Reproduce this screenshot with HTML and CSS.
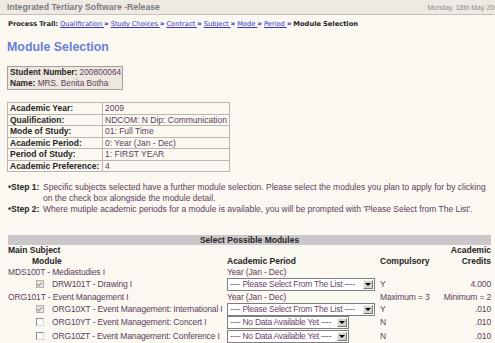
FILE: index.html
```html
<!DOCTYPE html>
<html lang="en">
<head>
    <meta charset="UTF-8">
    <title>Module Selection</title>
    <link rel="stylesheet" href="styles.css">
</head>
<body>
    <div class="topbar">
        <span class="app-name">Integrated Tertiary Software -Release</span>
        <span class="today">Monday, 18th May 2009</span>
    </div>

    <div class="trail">
        <b>Process Trail:</b>
        <a href="#">Qualification </a><span class="sep">&raquo;</span>
        <a href="#">Study Choices </a><span class="sep">&raquo;</span>
        <a href="#">Contract </a><span class="sep">&raquo;</span>
        <a href="#">Subject </a><span class="sep">&raquo;</span>
        <a href="#">Mode </a><span class="sep">&raquo;</span>
        <a href="#">Period </a><span class="sep">&raquo;</span>
        <b>Module Selection</b>
    </div>

    <h1 class="page-title">Module Selection</h1>

    <div class="student">
        <div><b>Student Number:</b> 200800064</div>
        <div><b>Name:</b> MRS. Benita Botha</div>
    </div>

    <table class="info">
        <tr><th>Academic Year:</th><td>2009</td></tr>
        <tr><th>Qualification:</th><td>NDCOM: N Dip: Communication</td></tr>
        <tr><th>Mode of Study:</th><td>01: Full Time</td></tr>
        <tr><th>Academic Period:</th><td>0: Year (Jan - Dec)</td></tr>
        <tr><th>Period of Study:</th><td>1: FIRST YEAR</td></tr>
        <tr><th>Academic Preference:</th><td>4</td></tr>
    </table>

    <div class="steps">
        <div class="step">
            <span class="step-label">&bull;Step 1:</span>
            <span>Specific subjects selected have a further module selection. Please select the modules you plan to apply for by clicking<br>on the check box alongside the module detail.</span>
        </div>
        <div class="step">
            <span class="step-label">&bull;Step 2:</span>
            <span>Where mutiple academic periods for a module is available, you will be prompted with 'Please Select from The List'.</span>
        </div>
    </div>

    <table class="modules">
        <colgroup>
            <col class="c-module">
            <col class="c-period">
            <col class="c-comp">
            <col class="c-credits">
        </colgroup>
        <tr><th colspan="4" class="bar">Select Possible Modules</th></tr>
        <tr class="head">
            <th colspan="3">Main Subject</th>
            <th class="num">Academic</th>
        </tr>
        <tr class="head">
            <th class="indent">Module</th>
            <th>Academic Period</th>
            <th>Compulsory</th>
            <th class="num">Credits</th>
        </tr>

        <tr>
            <td>MDS100T - Mediastudies I</td>
            <td>Year (Jan - Dec)</td>
            <td></td><td></td>
        </tr>
        <tr class="pick">
            <td class="mod"><span class="check on"></span>DRW101T - Drawing I</td>
            <td><div class="dropdown wide"><span class="dd-text">---- Please Select From The List ----</span><span class="dd-btn"></span></div></td>
            <td>Y</td>
            <td class="num">4.000</td>
        </tr>

        <tr>
            <td>ORG101T - Event Management I</td>
            <td>Year (Jan - Dec)</td>
            <td>Maximum = 3</td>
            <td class="num">Minimum = 2</td>
        </tr>
        <tr class="pick">
            <td class="mod"><span class="check on"></span>ORG10XT - Event Management: International I</td>
            <td><div class="dropdown wide"><span class="dd-text">---- Please Select From The List ----</span><span class="dd-btn"></span></div></td>
            <td>Y</td>
            <td class="num">.010</td>
        </tr>
        <tr class="pick">
            <td class="mod"><span class="check"></span>ORG10YT - Event Management: Concert I</td>
            <td><div class="dropdown"><span class="dd-text">---- No Data Available Yet ----</span><span class="dd-btn"></span></div></td>
            <td>N</td>
            <td class="num">.010</td>
        </tr>
        <tr class="pick">
            <td class="mod"><span class="check"></span>ORG10ZT - Event Management: Conference I</td>
            <td><div class="dropdown"><span class="dd-text">---- No Data Available Yet ----</span><span class="dd-btn"></span></div></td>
            <td>N</td>
            <td class="num">.010</td>
        </tr>
    </table>
</body>
</html>
```

FILE: styles.css
```css
html, body {
    overflow: hidden;
}
body {
    margin: 0;
    background: #fbf8f1;
    font-family: "Liberation Sans", Arial, sans-serif;
    font-size: 8.5px;
    line-height: 11px;
    color: #5c3f5c;
}
.topbar {
    height: 14px;
    background: #eee9e2;
    border-bottom: 1px solid #c6c1bb;
    display: flex;
    justify-content: space-between;
    align-items: center;
    padding-left: 7px;
}
.app-name {
    font-weight: bold;
    font-size: 8.7px;
    color: #7b7b7b;
}
.today {
    font-size: 7px;
    color: #8c8c8c;
    white-space: nowrap;
    margin-right: -7px;
}
.trail {
    font-family: "DejaVu Sans", Verdana, sans-serif;
    font-size: 6.7px;
    line-height: 10px;
    margin: 4px 8px 0;
    color: #1e1e1e;
    white-space: nowrap;
    word-spacing: -0.3px;
}
.trail a {
    color: #3535c8;
}
.trail .sep {
    color: #3535c8;
    font-weight: bold;
    font-size: 7.5px;
}
.page-title {
    margin: 10px 7px 0;
    font-size: 12.4px;
    line-height: 16px;
    color: #6b7fd9;
}
.student {
    width: 110px;
    margin: 11px 0 0 7px;
    padding: 0 2px;
    border: 1px solid #a39f9a;
    background: #eee7df;
    font-size: 8.3px;
    white-space: nowrap;
}
.student b, .info th {
    color: #262626;
}
.info {
    margin: 12px 0 0 7px;
    border-collapse: collapse;
    border: 1px solid #a9a5a0;
}
.info th, .info td {
    border: 1px solid #b9b5b0;
    padding: 0 2px;
    text-align: left;
    white-space: nowrap;
    line-height: 10.5px;
    height: 10.5px;
}
.info th {
    width: 90px;
}
.info td {
    width: 118px;
}
.steps {
    margin: 10px 0 0 8px;
}
.step {
    display: flex;
}
.step-label {
    flex: none;
    width: 35px;
    font-weight: bold;
    color: #262626;
}
.modules {
    margin: 20px 0 0 8px;
    width: 483px;
    border-collapse: collapse;
    table-layout: fixed;
}
.c-module { width: 219px; }
.c-period { width: 153px; }
.c-comp { width: 56px; }
.c-credits { width: 55px; }
.modules th, .modules td {
    padding: 0;
    text-align: left;
    white-space: nowrap;
    line-height: 11px;
}
.modules td {
    letter-spacing: -0.15px;
}
.modules th {
    color: #262626;
}
.modules .bar {
    background: #cbc7c9;
    text-align: center;
    line-height: 10px;
}
.modules .num {
    text-align: right;
}
.modules .indent {
    padding-left: 24px;
}
.pick td {
    height: 13.5px;
}
.mod {
    padding-left: 28px !important;
    overflow: visible;
}
.check {
    display: inline-block;
    box-sizing: border-box;
    width: 8px;
    height: 8px;
    margin-right: 8px;
    vertical-align: -1px;
    background: #fff;
    border: 1px solid #8a8a8a;
    border-right-color: #d8d8d8;
    border-bottom-color: #d8d8d8;
    position: relative;
}
.check.on {
    background: #e9e6e1;
    border-color: #b3b0ab;
}
.check.on::after {
    content: "";
    position: absolute;
    left: 1px;
    top: 0;
    width: 2px;
    height: 4px;
    border: solid #9c9a97;
    border-width: 0 1.5px 1.5px 0;
    transform: rotate(40deg);
}
.dropdown {
    display: flex;
    align-items: center;
    box-sizing: border-box;
    width: 122px;
    height: 13px;
    border: 1px solid #7f7f7f;
    background: #fff;
    color: #6a456a;
    letter-spacing: -0.25px;
}
.dropdown.wide {
    width: 148px;
}
.dd-text {
    flex: 1;
    padding-left: 2px;
    overflow: hidden;
    white-space: nowrap;
}
.dd-btn {
    flex: none;
    box-sizing: border-box;
    width: 10px;
    height: 9px;
    margin-right: 1px;
    background: #d7d3cc;
    border: 1px solid;
    border-color: #f4f2ee #7a7772 #7a7772 #f4f2ee;
    position: relative;
}
.dd-btn::after {
    content: "";
    position: absolute;
    left: 1px;
    top: 2px;
    border-left: 3px solid transparent;
    border-right: 3px solid transparent;
    border-top: 3px solid #000;
}
```
